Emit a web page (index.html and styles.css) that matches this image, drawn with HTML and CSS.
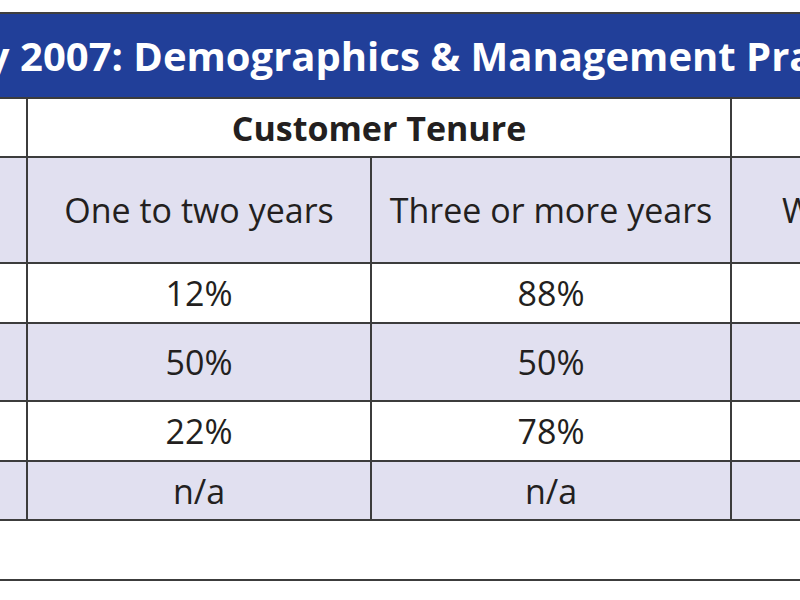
FILE: index.html
```html
<!DOCTYPE html>
<html lang="en">
<head>
<meta charset="utf-8">
<title>Survey 2007: Demographics &amp; Management Practices</title>
<link rel="stylesheet" href="styles.css">
</head>
<body>
<div class="viewport">
  <div class="sheet">
    <div class="title">Survey 2007: Demographics &amp; Management Practices</div>
    <div class="grid">
      <div class="cell"></div>
      <div class="cell group span2">Customer Tenure</div>
      <div class="cell"></div>

      <div class="cell alt"></div>
      <div class="cell alt">One to two years</div>
      <div class="cell alt">Three or more years</div>
      <div class="cell alt">Women-owned</div>

      <div class="cell"></div>
      <div class="cell">12%</div>
      <div class="cell">88%</div>
      <div class="cell"></div>

      <div class="cell alt"></div>
      <div class="cell alt">50%</div>
      <div class="cell alt">50%</div>
      <div class="cell alt"></div>

      <div class="cell"></div>
      <div class="cell">22%</div>
      <div class="cell">78%</div>
      <div class="cell"></div>

      <div class="cell alt"></div>
      <div class="cell alt">n/a</div>
      <div class="cell alt">n/a</div>
      <div class="cell alt"></div>
    </div>
    <div class="notes"></div>
  </div>
</div>
</body>
</html>
```

FILE: styles.css
```css
html, body {
  margin: 0;
  padding: 0;
  background: #ffffff;
}

body {
  font-family: "Open Sans", "Liberation Sans", sans-serif;
  color: #231f20;
  overflow: hidden;
}

.viewport {
  width: 800px;
  height: 600px;
  overflow: hidden;
}

.sheet {
  margin-left: -174px;
  width: 1250px;
  padding-top: 12px;
}

.title {
  border-top: 2px solid #3f3f3f;
  background: #213f99;
  color: #ffffff;
  font-weight: 700;
  font-size: 40px;
  height: 83px;
  line-height: 83px;
  padding-left: 48px;
  white-space: nowrap;
}

.grid {
  display: grid;
  grid-template-columns: 202px 344px 360px 344px;
  grid-template-rows: 59px 106px 60px 78px 60px 59px;
  border-top: 2px solid #3c3c3c;
}

.cell {
  box-sizing: border-box;
  border-right: 2px solid #3c3c3c;
  border-bottom: 2px solid #3c3c3c;
  display: flex;
  align-items: center;
  justify-content: center;
  font-size: 34px;
  white-space: nowrap;
  background: #ffffff;
}

.alt {
  background: #e1e0f0;
}

.span2 {
  grid-column: span 2;
}

.group {
  font-weight: 700;
}

.notes {
  height: 58px;
  border-bottom: 2px solid #3c3c3c;
}
```
